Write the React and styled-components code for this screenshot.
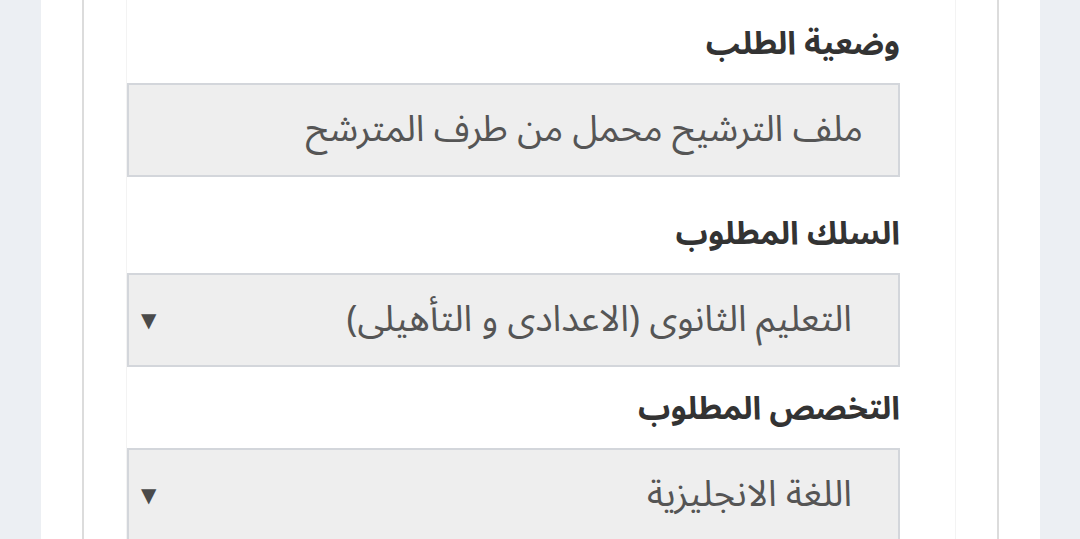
import React from "react";
import styled, { createGlobalStyle } from "styled-components";

const GlobalStyle = createGlobalStyle`
  html, body {
    margin: 0;
    padding: 0;
    background: #eceff3;
  }
  body {
    font-family: "Noto Sans Arabic", "DejaVu Sans", sans-serif;
  }
`;

const fields = [
  {
    label: "وضعية الطلب",
    value: "ملف الترشيح محمل من طرف المترشح",
    select: false,
  },
  {
    label: "السلك المطلوب",
    value: "التعليم الثانوى (الاعدادى و التأهيلى)",
    select: true,
  },
  {
    label: "التخصص المطلوب",
    value: "اللغة الانجليزية",
    select: true,
  },
];

const App = () => {
  return (
    <>
      <GlobalStyle />
      <Page>
        <Container>
          <Card>
            <Column dir="rtl">
              {fields.map((field) => (
                <Field key={field.label} select={field.select}>
                  <Label>{field.label}</Label>
                  <Box select={field.select}>
                    <Value>{field.value}</Value>
                    {field.select && <Arrow>▼</Arrow>}
                  </Box>
                </Field>
              ))}
            </Column>
          </Card>
        </Container>
      </Page>
    </>
  );
};

const Page = styled.div`
  min-height: 100vh;
  padding: 0 40px 0 41px;
  display: flex;
`;

const Container = styled.div`
  flex: 1;
  background: #ffffff;
  padding: 0 41px;
  display: flex;
`;

const Card = styled.div`
  flex: 1;
  border-left: 2px solid #dcdcdc;
  border-right: 2px solid #dcdcdc;
  padding: 0 41px 0 42px;
  display: flex;
`;

const Column = styled.div`
  flex: 1;
  border-left: 1px solid #f3f3f3;
  border-right: 1px solid #f3f3f3;
  padding: 21px 55px 0 0;
  display: flex;
  flex-direction: column;
`;

const Field = styled.div`
  display: flex;
  flex-direction: column;
  margin-bottom: ${(props) => (props.select ? "19px" : "34px")};
`;

const Label = styled.label`
  font-size: 32px;
  font-weight: bold;
  color: #333333;
  line-height: 46px;
  margin-bottom: 16px;
`;

const Box = styled.div`
  height: 90px;
  background: #eeeeee;
  border: 2px solid #d3d6db;
  display: flex;
  align-items: center;
  padding: 0 ${(props) => (props.select ? "46px" : "35px")} 0 12px;
  color: #555555;
`;

const Value = styled.span`
  font-size: 36.5px;
  line-height: 50px;
  white-space: nowrap;
`;

const Arrow = styled.span`
  margin-right: auto;
  font-family: "DejaVu Sans", sans-serif;
  font-size: 20px;
  color: #4a4a4a;
`;

export default App;
